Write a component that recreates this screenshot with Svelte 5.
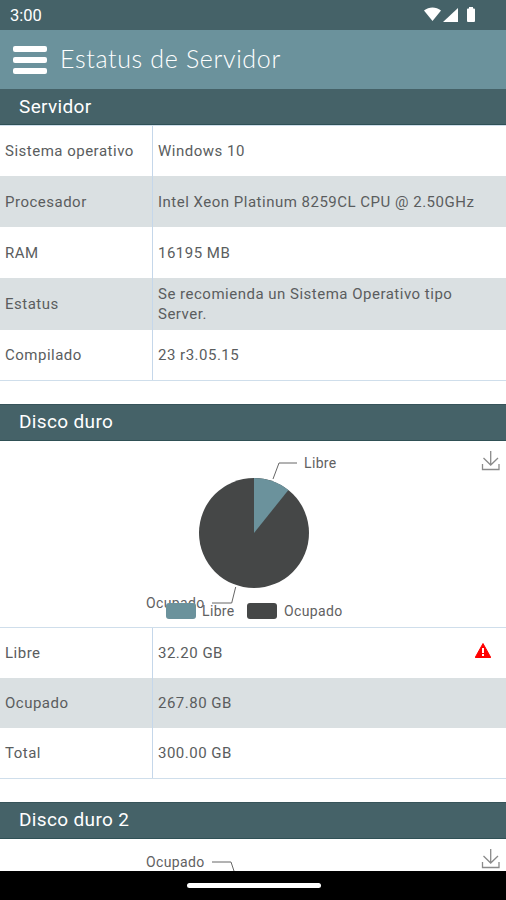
<script>
  const server = [
    ['Sistema operativo', 'Windows 10', 50],
    ['Procesador', 'Intel Xeon Platinum 8259CL CPU @ 2.50GHz', 51],
    ['RAM', '16195 MB', 51],
    ['Estatus', 'Se recomienda un Sistema Operativo tipo Server.', 52],
    ['Compilado', '23 r3.05.15', 51]
  ];
  const disk = [
    ['Libre', '32.20 GB', 50, true],
    ['Ocupado', '267.80 GB', 50],
    ['Total', '300.00 GB', 51]
  ];
</script>

{#snippet rows(list)}
  <div class="table">
    {#each list as [label, value, height, warn]}
      <div class="row" style="height:{height}px">
        <div class="label">{label}</div>
        <div class="value">{value}</div>
        {#if warn}
          <svg class="warn" viewBox="0 0 16 15" width="16" height="15">
            <path d="M8 .5 15.8 14.5H.2Z" fill="#f00" stroke="#f00" stroke-linejoin="round" />
            <rect x="7" y="5" width="2" height="5" fill="#fff" />
            <rect x="7" y="11" width="2" height="2" fill="#fff" />
          </svg>
        {/if}
      </div>
    {/each}
  </div>
{/snippet}

{#snippet download(y)}
  <g fill="none" stroke="#8a8a8a" stroke-width="1.3" transform="translate(0 {y})">
    <path d="M490.7 0V14M483.5 7 490.7 14 498 7" />
    <path d="M482.5 13V18.5H499V13" />
  </g>
{/snippet}

<main class="screen">
  <div class="status">
    <span class="time">3:00</span>
    <svg class="status-icons" viewBox="0 0 56 18" width="56" height="18">
      <path d="M1 4.5C6 .5 13 .5 18 4.5L9.5 15Z" fill="#fff" />
      <path d="M35 2V16H20Z" fill="#fff" />
      <path d="M44 3.5a1 1 0 0 1 1-1H46V1H50V2.5H51a1 1 0 0 1 1 1V15a1 1 0 0 1-1 1H45a1 1 0 0 1-1-1Z" fill="#fff" />
    </svg>
  </div>

  <header class="appbar">
    <div class="burger"><i></i><i></i><i></i></div>
    <h1>Estatus de Servidor</h1>
  </header>

  <h2 class="section first">Servidor</h2>
  {@render rows(server)}

  <h2 class="section">Disco duro</h2>
  <svg class="chart" viewBox="0 441 506 186" width="506" height="186">
    <circle cx="254" cy="533" r="55" fill="#454747" />
    <path d="M254 533V478A55 55 0 0 1 288.4 490Z" fill="#6b929c" />
    <g fill="none" stroke="#666" stroke-width="1">
      <path d="M273 479 279 463H297" />
      <path d="M235.7 587 231.7 603H212" />
    </g>
    <g class="chart-text">
      <text x="304" y="468">Libre</text>
      <text x="146" y="608">Ocupado</text>
    </g>
    <rect x="166" y="603" width="30" height="16" rx="3" fill="#6b929c" />
    <rect x="247" y="603" width="30" height="16" rx="3" fill="#454747" />
    <g class="chart-text">
      <text x="202" y="616">Libre</text>
      <text x="284" y="616">Ocupado</text>
    </g>
    {@render download(451)}
  </svg>
  {@render rows(disk)}

  <h2 class="section">Disco duro 2</h2>
  <svg class="chart short" viewBox="0 839 506 32" width="506" height="32">
    <path d="M212 862H231L234 871" fill="none" stroke="#666" stroke-width="1" />
    <text class="chart-label" x="146" y="867">Ocupado</text>
    {@render download(849)}
  </svg>

  <div class="navbar"><span></span></div>
</main>

<style>
  :global(body) {
    margin: 0;
    background: #fff;
  }
  .screen {
    position: relative;
    width: 506px;
    height: 900px;
    overflow: hidden;
    font-family: Roboto, "Liberation Sans", sans-serif;
    background: #fff;
  }
  .status {
    height: 30px;
    display: flex;
    align-items: center;
    justify-content: space-between;
    padding: 0 27px 0 10px;
    background: #456268;
    color: #fff;
  }
  .time {
    font-size: 16.5px;
  }
  .status-icons {
    display: block;
  }
  .appbar {
    height: 59px;
    display: flex;
    align-items: center;
    gap: 13px;
    padding-left: 13px;
    background: #6b929c;
    color: #fff;
  }
  .burger {
    width: 34px;
    display: flex;
    flex-direction: column;
    gap: 5px;
  }
  .burger i {
    display: block;
    height: 6px;
    border-radius: 2px;
    background: #fff;
  }
  h1 {
    margin: 0 0 3px;
    font-family: Lato, sans-serif;
    font-size: 25px;
    font-weight: 300;
    letter-spacing: 0.65px;
  }
  .section {
    margin: 23px 0 0;
    height: 37px;
    line-height: 34px;
    padding-left: 19px;
    font-size: 19px;
    font-weight: 400;
    letter-spacing: 0.35px;
    color: #fff;
    background: #456268;
    border-top: 1px solid #37545a;
    border-bottom: 1px solid #2f5055;
    box-sizing: border-box;
  }
  .section.first {
    margin-top: 0;
    height: 36px;
    line-height: 35px;
    border-top: 0;
  }
  .table {
    border-top: 1px solid #cfdeeb;
  }
  .row {
    position: relative;
    display: flex;
    box-sizing: border-box;
    font-size: 15px;
    line-height: 20px;
    letter-spacing: 0.5px;
    color: #5a5d5e;
  }
  .row:nth-child(even) {
    background: #dae0e2;
  }
  .row:last-child {
    border-bottom: 1px solid #cfdeeb;
  }
  .label {
    width: 153px;
    flex: none;
    box-sizing: border-box;
    display: flex;
    align-items: center;
    padding-left: 5px;
    border-right: 1px solid #c5d7ea;
  }
  .value {
    flex: 1;
    display: flex;
    align-items: center;
    padding: 0 20px 0 5px;
  }
  .warn {
    position: absolute;
    right: 15px;
    top: 15px;
  }
  .chart {
    display: block;
  }
  .chart-text text,
  .chart-label {
    font-size: 14px;
    letter-spacing: 0.35px;
    fill: #5f6162;
  }
  .navbar {
    position: absolute;
    left: 0;
    right: 0;
    bottom: 0;
    height: 29px;
    background: #000;
    display: flex;
    justify-content: center;
    padding-top: 12px;
    box-sizing: border-box;
  }
  .navbar span {
    width: 134px;
    height: 5px;
    margin-left: 1px;
    border-radius: 3px;
    background: #fff;
  }
</style>
